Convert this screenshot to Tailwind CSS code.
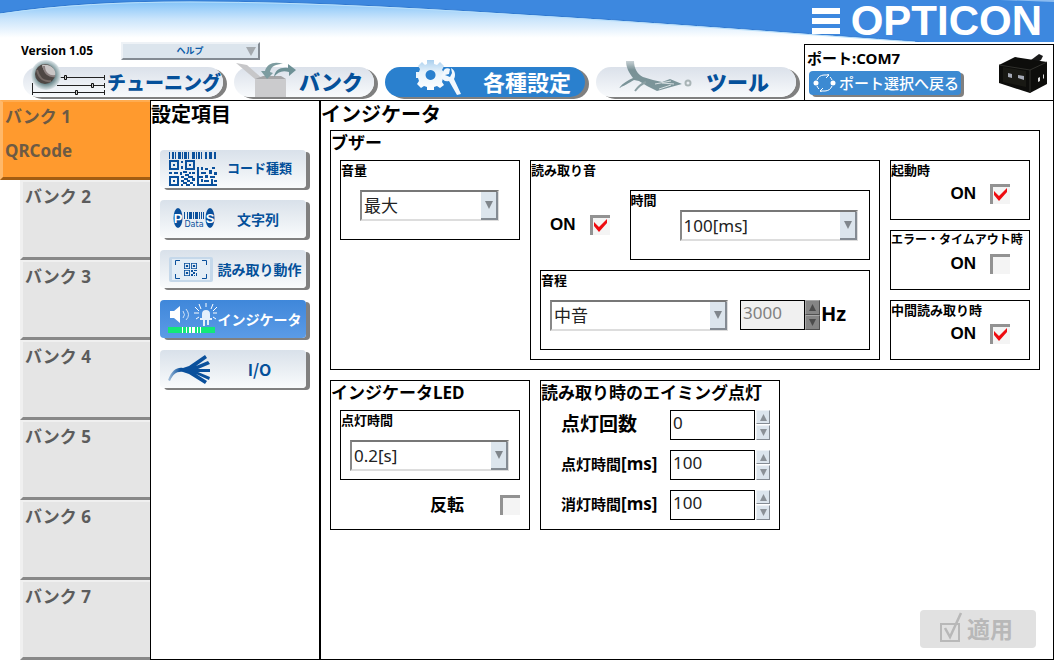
<!DOCTYPE html>
<html lang="ja">
<head>
<meta charset="utf-8">
<title>OPTICON</title>
<script src="https://cdn.jsdelivr.net/npm/@tailwindcss/browser@4"></script>
</head>
<body class="flex min-h-screen flex-col bg-white font-['Noto_Sans','Noto_Sans_CJK_JP',sans-serif] font-bold text-black">

<svg class="hidden" aria-hidden="true">
  <symbol id="finder" viewBox="0 0 7 7"><path fill-rule="evenodd" d="M0 0h7v7H0zM1 1v5h5V1zM2.200 2.200h2.600v2.600H2.200z"/></symbol>
  <symbol id="check" viewBox="0 0 20 20"><path d="M4 7l5 5L17 4V8L9 17L4 11z" fill="#ee0c10"/></symbol>
</svg>

<header class="relative">
  <svg class="absolute inset-x-0 top-0 h-[42px] w-full" viewBox="0 0 1054 42" preserveAspectRatio="none" aria-hidden="true">
    <defs>
      <linearGradient id="sky" x1="0" y1="0" x2="0" y2="1"><stop offset="0" stop-color="#7cc0f8"/><stop offset=".45" stop-color="#c9e4fb"/><stop offset=".9" stop-color="#fff"/></linearGradient>
    </defs>
    <rect width="1054" height="42" fill="url(#sky)"/>
    <path d="M0 13C60 4 120 1 190 1C320 1 440 9 570 17C680 24 800 33 925 42H1054V0H0Z" fill="#3d88df"/>
    <path d="M0 13C60 4 120 1 190 1C320 1 440 9 570 17C680 24 800 33 925 42" fill="none" stroke="#2f78d0" stroke-width="1"/>
    <path d="M0 14C60 5 120 2 190 2C320 2 440 10 570 18C680 25 800 34 915 42" fill="none" stroke="#b9e0fb" stroke-width="1"/>
    <path d="M1000 0L1054 2V0Z" fill="#8cbcf0"/>
  </svg>

  <div class="relative flex h-[42px] items-center justify-end gap-[11px] pr-[12px] text-white">
    <svg class="h-[27px] w-[28px]" viewBox="0 0 28 27" fill="currentColor" aria-hidden="true"><path d="M0 0h28v6H0zM0 10h28v6H0zM0 20h28v6H0z"/></svg>
    <span class="font-['Liberation_Sans',sans-serif] text-[42px] leading-[40px]">OPTICON</span>
  </div>

  <div class="relative flex h-[58px]">
    <div class="flex-1">
      <div class="flex h-[18px] items-center gap-[29px] pl-[21px]">
        <span class="w-[71px] text-[12px] leading-[16px] whitespace-nowrap">Version 1.05</span>
        <button type="button" class="flex h-[18px] w-[139px] items-center border-2 border-t-[#eef2f6] border-l-[#eef2f6] border-r-[#848b93] border-b-[#848b93] bg-[#dce5ed] pr-[2px] pl-[11px] text-[9px] font-bold text-[#0c5ca8]">
          <span class="flex-1 text-center">ヘルプ</span>
          <svg class="h-[9px] w-[10px]" viewBox="0 0 10 9" aria-hidden="true"><path d="M0 0h10L5 9z" fill="#a4a9ae"/></svg>
        </button>
      </div>
      <nav class="flex gap-[11px] pt-[7px] pl-[23px] text-[#04509a]">
        <button type="button" class="relative h-[30px] w-[200px] rounded-full bg-linear-to-b from-[#dbe1ea] to-[#f8fafc] pr-[2px] text-right text-[19px] leading-[32px] font-black whitespace-nowrap shadow-[4px_2px_0_#808080]">
          <svg class="absolute -top-[7px] left-[8px] h-[38px] w-[76px]" viewBox="0 0 76 38" aria-hidden="true">
            <defs><radialGradient id="knob"><stop offset=".55" stop-color="#5d7b80"/><stop offset=".8" stop-color="#a4b8bb"/><stop offset="1" stop-color="#dfe6ea"/></radialGradient></defs>
            <g stroke="#222" stroke-width="1" fill="none"><path d="M28 17.500h45M26 25.500h47M1.500 32.500h72M73.500 15v5M73.500 23v5M73.500 30v5M1.500 23v12"/></g>
            <g fill="#ccc" stroke="#111"><path d="M33.500 15.500h2v4h-2zM60.500 23.500h2v4h-2zM44.500 30.500h2v4h-2z"/></g>
            <circle cx="15" cy="15" r="15" fill="url(#knob)"/>
            <circle cx="14" cy="14" r="10" fill="#4e4744"/>
            <path d="M11 5C20 3 26 10 24 16C19 17 12 12 11 5Z" fill="#c9c5c5"/><path d="M13 6C13 13 18 17 24 16" fill="none" stroke="#8b8080" stroke-width="2"/><path d="M6 10C8 19 14 22 20 21" fill="none" stroke="#766b67" stroke-width="2"/>
          </svg>チューニング</button>
        <button type="button" class="relative h-[30px] w-[140px] rounded-full bg-linear-to-b from-[#dbe1ea] to-[#f8fafc] pr-[11px] text-right text-[21px] leading-[30px] font-black whitespace-nowrap shadow-[4px_2px_0_#808080]">
          <svg class="absolute -top-[5px] left-[2px] h-[36px] w-[60px]" viewBox="0 0 60 36" aria-hidden="true">
            <path d="M0 1L11 3L27 17H19Z" fill="#c7c7c9"/><path d="M19 17L27 14H45L50 17Z" fill="#a5a5a7"/><path d="M19 17h31v18H19z" fill="#cbcbcd"/>
            <path d="M47 2C39-1 31 1 29 9H25L31 17L37 11L34 10C35 4 40 2 47 2Z" fill="#7d9ca0"/>
            <path d="M38 15C39 8 44 5 52 6V2L60 8L53 14V10C46 8 42 10 38 15Z" fill="#6e9196"/>
          </svg>バンク</button>
        <button type="button" aria-current="page" class="relative h-[30px] w-[200px] rounded-full bg-[#2a80ce] pr-[14px] text-right text-[22px] leading-[30px] font-bold whitespace-nowrap text-white shadow-[4px_2px_0_#808080]">
          <svg class="absolute -top-[7px] left-[31px] h-[36px] w-[46px]" viewBox="0 0 46 36" aria-hidden="true">
            <defs><linearGradient id="gear" x1="0" y1="0" x2="0" y2="1"><stop offset="0" stop-color="#a9cfee"/><stop offset=".4" stop-color="#e6f2fb"/><stop offset="1" stop-color="#fff"/></linearGradient></defs>
            <path fill="url(#gear)" fill-rule="evenodd" d="M11 0h7v4l3 1 3-3 4 4-2 4 2 2h1v6h-2l-1 4 2 3-4 3-3-2-3 1v3h-7v-3l-3-1-3 2-4-4 2-3-1-3H0v-6h3l1-3-2-3 4-4 3 3 2-1zM14.500 10a5 5 0 1 0 .1 0z"/>
            <path d="M29 15l4-1 1-5c-3-2-7 0-7 4l-2 3c1 4 4 6 8 5l8 14 4-1-7-15c2-4 1-9-3-11l1 5-2 4z" fill="#f2f8fd"/>
          </svg>各種設定</button>
        <button type="button" class="relative h-[30px] w-[200px] rounded-full bg-linear-to-b from-[#dbe1ea] to-[#f8fafc] pr-[27px] text-right text-[21px] leading-[30px] font-black whitespace-nowrap shadow-[4px_2px_0_#808080]">
          <svg class="absolute -top-[6px] left-[23px] h-[34px] w-[74px]" viewBox="0 0 74 34" aria-hidden="true">
            <defs><linearGradient id="wire" x1="0" y1="0" x2="0" y2="1"><stop offset="0" stop-color="#c8d1d5"/><stop offset=".3" stop-color="#799196"/><stop offset="1" stop-color="#7c969b"/></linearGradient></defs>
            <path d="M7 0h8c0 7 3 13 9 16l10 3 9 2 8-3 12 5-11 3-14 4-10-5-8-5-5-1C13 20 7 24 0 27c4-5 9-8 14-10C10 12 7 6 7 0z" fill="url(#wire)"/>
            <path d="M27 21c-5 2-8 5-11 9" fill="none" stroke="#8ba0a4" stroke-width="2"/>
            <path d="M36 23l16-3M40 28l12-4M43 22l12 1" stroke="#d8e0e3"/>
            <circle cx="69" cy="22" r="2.500" fill="none" stroke="#a9b4b6" stroke-width="2"/>
          </svg>ツール</button>
      </nav>
    </div>
    <section class="mt-[2px] flex w-[250px] border border-b-0 border-black pt-[2px] pr-[4px] pl-[4px]">
      <div class="flex-1">
        <p class="-ml-[2px] text-[15px] leading-[22px]">ポート:COM7</p>
        <button type="button" class="mt-[2px] flex h-[24px] w-[152px] items-center gap-[3px] rounded-[4px] bg-[#3c8ad2] pl-[4px] text-[15px] leading-[22px] font-medium whitespace-nowrap text-white shadow-[3px_2px_0_#808080]">
          <svg class="h-[18px] w-[23px] shrink-0" viewBox="0 0 23 18" aria-hidden="true"><g fill="none" stroke="#fff" stroke-width="1"><path d="M4 6A8 8 0 0 1 11 1H15M19 6A8 8 0 0 0 17 3M19 12A8 8 0 0 1 12 17H8M4 12A8 8 0 0 0 6 15"/><path d="M13-1l3 2-3 3M10 14l-3 3 3 2"/></g><circle cx="3" cy="9" r="2.500" fill="#fff"/><circle cx="20" cy="9" r="2.500" fill="#fff"/></svg>
          ポート選択へ戻る</button>
      </div>
      <svg class="mt-[6px] h-[42px] w-[52px]" viewBox="0 0 52 42" aria-hidden="true">
        <path d="M34 7l8-6 4 2-2 4-5 3z" fill="#1b1b1b"/><path d="M2 12L18 4L50 9V31L33 40L2 30Z" fill="#0d0d0b"/><path d="M2 12L33 17L50 9M33 17V40" stroke="#30302c" fill="none"/><path d="M6 14L29 18V34L6 29Z" fill="#191914"/>
        <path d="M11 20l4 1v4l-4-1zM21 22l6 1v4l-6-2z" fill="#a5a9b5"/><path d="M41 25l2-1v4l-2 1zM46 22l1-1v4l-1 1z" fill="#ddd"/>
      </svg>
    </section>
  </div>
</header>

<main class="flex flex-1">
  <nav class="flex w-[150px] shrink-0 flex-col text-left text-[17px] leading-[24px] text-[#5c5c5c]">
    <button type="button" class="flex h-[80px] flex-col items-start gap-[10px] border-t-2 border-b-3 border-l-3 border-t-[#ffac50] border-b-[#a35d12] border-l-[#ffb869] bg-[#ff9a2e] pt-[3px] pl-[2px] text-[#6d5a44]"><span>バンク 1</span><span>QRCode</span></button>
    <button type="button" class="ml-[20px] flex h-[80px] border-t-2 border-b-3 border-l-3 border-t-[#f0f0f0] border-b-[#888] border-l-[#f0f0f0] bg-[#e5e5e5] pt-[3px] pl-[2px]">バンク 2</button>
    <button type="button" class="ml-[20px] flex h-[80px] border-t-2 border-b-3 border-l-3 border-t-[#f0f0f0] border-b-[#888] border-l-[#f0f0f0] bg-[#e5e5e5] pt-[3px] pl-[2px]">バンク 3</button>
    <button type="button" class="ml-[20px] flex h-[80px] border-t-2 border-b-3 border-l-3 border-t-[#f0f0f0] border-b-[#888] border-l-[#f0f0f0] bg-[#e5e5e5] pt-[3px] pl-[2px]">バンク 4</button>
    <button type="button" class="ml-[20px] flex h-[80px] border-t-2 border-b-3 border-l-3 border-t-[#f0f0f0] border-b-[#888] border-l-[#f0f0f0] bg-[#e5e5e5] pt-[3px] pl-[2px]">バンク 5</button>
    <button type="button" class="ml-[20px] flex h-[80px] border-t-2 border-b-3 border-l-3 border-t-[#f0f0f0] border-b-[#888] border-l-[#f0f0f0] bg-[#e5e5e5] pt-[3px] pl-[2px]">バンク 6</button>
    <button type="button" class="ml-[20px] flex h-[80px] border-t-2 border-b-3 border-l-3 border-t-[#f0f0f0] border-b-[#888] border-l-[#f0f0f0] bg-[#e5e5e5] pt-[3px] pl-[2px]">バンク 7</button>
  </nav>

  <nav class="w-[170px] shrink-0 border border-black">
    <h2 class="text-[20px] leading-[28px]">設定項目</h2>
    <div class="mt-[21px] ml-[9px] flex w-[146px] flex-col gap-[12px] text-[14px] text-[#04509a]">
      <button type="button" class="flex h-[38px] items-center rounded-[4px] bg-linear-to-b from-[#d9e1ea] to-[#f9fbfc] pl-[8px] whitespace-nowrap shadow-[4px_2px_0_#808080]">
        <svg class="-mr-[4px] h-[34px] w-[49px]" viewBox="0 0 49 34" fill="#0a509c" shape-rendering="crispEdges" aria-hidden="true">
          <path d="M1 0h1v7H1zM4 0h2v7H4zM7 0h1v7H7zM10 0h3v7h-3zM14 0h1v7h-1zM16 0h3v7h-3zM20 0h1v7h-1zM24 0h3v7h-3zM28 0h1v7h-1zM30 0h2v7h-2zM33 0h1v7h-1zM37 0h2v7h-2zM41 0h3v7h-3zM46 0h2v7h-2z"/>
          <path fill-rule="evenodd" d="M1 8h10v10H1zM3 10v6h6v-6zM5 12h2v2H5zM17 8h10v10H17zM19 10v6h6v-6zM21 12h2v2h-2zM1 24h10v10H1zM3 26v6h6v-6zM5 28h2v2H5z"/>
          <path d="M13 9h2v2h-2zM13 14h2v3h-2zM1 20h3v2H1zM6 20h4v2H6zM12 20h2v3h-2zM15 19h4v2h-4zM21 20h2v2h-2zM24 20h3v2h-3zM17 22h4v2h-4zM13 24h3v2h-3zM20 24h5v2h-5zM16 26h4v2h-4zM24 26h3v3h-3zM13 28h3v2h-3zM19 28h3v2h-3zM15 30h4v2h-4zM22 30h3v2h-3zM13 32h2v2h-2zM18 32h4v2h-4zM25 32h2v2h-2zM29 15h2v19h-2zM31 32h18v2H31zM33 15h2v3h-2zM37 16h3v2h-3zM44 15h3v2h-3zM33 20h5v2h-5zM41 18h3v4h-3zM46 20h3v3h-3zM31 24h4v2h-4zM37 23h3v3h-3zM42 24h5v2h-5zM33 27h2v3h-2zM36 28h5v2h-5zM43 27h2v5h-2zM46 28h3v2h-3z"/>
        </svg><span class="flex-1 text-center text-[13px]">コード種類</span></button>
      <button type="button" class="flex h-[38px] items-center rounded-[4px] bg-linear-to-b from-[#d9e1ea] to-[#f9fbfc] pr-[3px] pl-[8px] whitespace-nowrap shadow-[4px_2px_0_#808080]">
        <svg class="-mr-[4px] h-[34px] w-[49px]" viewBox="0 0 49 34" aria-hidden="true">
          <g fill="#0a509c"><ellipse cx="10" cy="16" rx="4.500" ry="10"/><ellipse cx="42" cy="16" rx="4.500" ry="10"/><path d="M16 10h1v7h-1zM19 10h1v7h-1zM21 10h3v7h-3zM25 10h1v7h-1zM27 10h3v7h-3zM31 10h1v7h-1zM33 10h1v7h-1zM35 10h1v7h-1z"/></g>
          <g font-family="Liberation Sans" font-weight="bold" text-anchor="middle"><text x="10" y="21" font-size="13" fill="#fff">P</text><text x="42" y="21" font-size="13" fill="#fff">S</text><text x="26" y="25" font-size="8" font-weight="normal" font-family="DejaVu Sans" fill="#0a509c">Data</text></g>
        </svg><span class="flex-1 text-center">文字列</span></button>
      <button type="button" class="flex h-[38px] items-center rounded-[4px] bg-linear-to-b from-[#d9e1ea] to-[#f9fbfc] pl-[8px] whitespace-nowrap shadow-[4px_2px_0_#808080]">
        <svg class="-mr-[4px] h-[34px] w-[49px]" viewBox="0 0 49 34" fill="#0a509c" aria-hidden="true">
          <rect x="1" y="5" width="44" height="25" rx="2" fill="#c5d8ea"/><rect x="4" y="7" width="38" height="21" fill="#e3edf6"/>
          <path d="M7.500 13V8.500H12M34 8.500h4.500V13M38.500 22v4.500H34M12 26.500H7.500V22" fill="none" stroke="#0a509c"/>
          <use href="#finder" x="16" y="11" width="6" height="6"/><use href="#finder" x="23" y="11" width="6" height="6"/><use href="#finder" x="16" y="18" width="6" height="6"/>
          <path d="M23 18h2v2h-2zM26 18h3v1h-3zM25 20h2v2h-2zM28 21h1v3h-1zM23 22h2v2h-2zM26 23h1v1h-1z"/>
        </svg><span class="flex-1 text-center">読み取り動作</span></button>
      <button type="button" aria-current="true" class="flex h-[38px] items-center rounded-[4px] bg-linear-to-b from-[#3f87da] to-[#5b9be6] pl-[8px] whitespace-nowrap text-white shadow-[4px_2px_0_#808080]">
        <svg class="-mr-[4px] h-[34px] w-[49px]" viewBox="0 0 49 34" fill="#fff" aria-hidden="true">
          <path d="M2 9h4l6-5v17l-6-5H2z"/><path d="M15 9q3 4 0 7M18 7q5 6 0 11" fill="none" stroke="#d0e3f8" stroke-width="1"/>
          <path d="M34 12a4 4 0 0 1 8 0v4h2v2H32v-2h2zM35 18h2v6h-2zM39 18h2v5h-2z" fill="#e4effb"/>
          <path d="M38 1v4M31 2l2 5M45 2l-2 5M27 5l4 4M49 5l-4 4M26 11h5M50 11h-5M28 17l3-2M48 17l-3-2" stroke="#fff"/>
          <path d="M0 25h47v6H0z" fill="#12e878"/><path d="M14 25h1v6h-1zM18 25h1v6h-1zM21 25h2v6h-2zM24 25h3v6h-3zM29 25h1v6h-1zM32 25h1v6h-1z"/>
        </svg><span class="flex-1 text-center">インジケータ</span></button>
      <button type="button" class="flex h-[38px] items-center rounded-[4px] bg-linear-to-b from-[#d9e1ea] to-[#f9fbfc] pl-[8px] whitespace-nowrap shadow-[4px_2px_0_#808080]">
        <svg class="-mr-[4px] h-[34px] w-[49px]" viewBox="0 0 49 34" aria-hidden="true">
          <defs><linearGradient id="cable"><stop offset="0" stop-color="#a9c3dd"/><stop offset=".3" stop-color="#0a509c"/></linearGradient></defs>
          <path d="M0 28C4 18 9 15 15 16L21 14L37 3L39 6L28 14L40 9L42 12L30 17H42V20H30L42 25L41 28L28 22L39 29L37 32L21 22L15 20C9 19 5 22 2 29Z" fill="url(#cable)"/>
        </svg><span class="flex-1 text-center font-['Noto_Sans_CJK_JP',sans-serif] text-[16px]">I/O</span></button>
    </div>
  </nav>

  <section class="flex min-w-0 flex-1 flex-col border border-black">
    <h2 class="mb-px text-[20px] leading-[28px]">インジケータ</h2>

    <section class="mr-[13px] ml-[9px] border border-black pb-[9px]">
      <h3 class="mb-[5px] text-[17px] leading-[24px]">ブザー</h3>
      <div class="grid grid-cols-[180px_1fr_140px] gap-[10px] px-[9px]">
        <div class="h-[80px] border border-black">
          <h4 class="text-[13px] leading-[18px]"><label for="volume">音量</label></h4>
          <div class="relative mt-[11px] mr-[20px] ml-[19px]">
            <select id="volume" class="h-[31px] w-full appearance-none border-2 border-t-[#777] border-r-[#ddd] border-b-[#ddd] border-l-[#888] bg-white pl-[2px] text-[17px] font-normal text-[#222]"><option>最大</option><option>中</option><option>小</option></select>
            <span class="pointer-events-none absolute top-[2px] right-[1px] bottom-[1px] flex w-[17px] items-center justify-center border-r-2 border-b-2 border-[#848b93] bg-[#dce5ed]"><svg class="h-[8px] w-[8px]" viewBox="0 0 8 8" fill="#80868c"><path d="M0 0h8L4 8z"/></svg></span>
          </div>
        </div>

        <div class="border border-black pb-[9px]">
          <h4 class="text-[13px] leading-[18px]">読み取り音</h4>
          <div class="mt-[11px] flex items-center gap-[20px] pr-[9px] pl-[19px]">
            <label class="flex items-center gap-[14px] font-['Liberation_Sans',sans-serif] text-[17px] leading-[20px]">ON
              <span class="relative size-[20px]"><input type="checkbox" checked class="peer block size-[20px] appearance-none border-t-3 border-l-3 border-[#929292] bg-[#f4f4f4]"><svg class="pointer-events-none absolute inset-0 hidden size-[20px] peer-checked:block"><use href="#check"/></svg></span></label>
            <div class="h-[70px] flex-1 border border-black">
              <h5 class="text-[13px] leading-[18px]"><label for="time">時間</label></h5>
              <div class="relative mt-[1px] mr-[11px] ml-[49px]">
                <select id="time" class="h-[31px] w-full appearance-none border-2 border-t-[#777] border-r-[#ddd] border-b-[#ddd] border-l-[#888] bg-white pl-[2px] text-[17px] font-normal text-[#222]"><option>100[ms]</option><option>200[ms]</option></select>
                <span class="pointer-events-none absolute top-[2px] right-[1px] bottom-[1px] flex w-[17px] items-center justify-center border-r-2 border-b-2 border-[#848b93] bg-[#dce5ed]"><svg class="h-[8px] w-[8px]" viewBox="0 0 8 8" fill="#80868c"><path d="M0 0h8L4 8z"/></svg></span>
              </div>
            </div>
          </div>
          <div class="mx-[9px] mt-[10px] h-[80px] border border-black">
            <h5 class="text-[13px] leading-[18px]"><label for="pitch">音程</label></h5>
            <div class="mt-[11px] flex pl-[9px]">
              <div class="relative mr-[12px] flex-1">
                <select id="pitch" class="h-[31px] w-full appearance-none border-2 border-t-[#777] border-r-[#ddd] border-b-[#ddd] border-l-[#888] bg-white pl-[2px] text-[17px] font-normal text-[#222]"><option>中音</option><option>高音</option><option>低音</option></select>
                <span class="pointer-events-none absolute top-[2px] right-[1px] bottom-[1px] flex w-[17px] items-center justify-center border-r-2 border-b-2 border-[#848b93] bg-[#dce5ed]"><svg class="h-[8px] w-[8px]" viewBox="0 0 8 8" fill="#80868c"><path d="M0 0h8L4 8z"/></svg></span>
              </div>
              <input aria-label="周波数" inputmode="numeric" value="3000" disabled class="h-[30px] w-[65px] border border-black bg-[#f0f0f0] pb-[6px] pl-[2px] text-[17px] font-normal text-[#808080]">
              <div class="flex w-[15px] flex-col">
                <button type="button" disabled aria-label="増やす" class="flex h-[15px] items-center justify-center border border-t-[#a8a8a8] border-r-[#505050] border-b-[#505050] border-l-[#a8a8a8] bg-[#858585]"><svg class="h-[7px] w-[7px]" viewBox="0 0 8 8" fill="#4c4c4c"><path d="M4 0l4 8H0z"/></svg></button>
                <button type="button" disabled aria-label="減らす" class="flex h-[15px] items-center justify-center border border-t-[#a8a8a8] border-r-[#505050] border-b-[#505050] border-l-[#a8a8a8] bg-[#858585]"><svg class="h-[7px] w-[7px]" viewBox="0 0 8 8" fill="#4c4c4c"><path d="M0 0h8L4 8z"/></svg></button>
              </div>
              <span class="w-[49px] pl-[1px] text-[20px] leading-[28px]">Hz</span>
            </div>
          </div>
        </div>

        <div class="flex flex-col gap-[10px]">
          <div class="h-[60px] border border-black">
            <h4 class="text-[13px] leading-[18px]">起動時</h4>
            <label class="mt-[5px] mr-[19px] flex items-center justify-end gap-[14px] font-['Liberation_Sans',sans-serif] text-[17px] leading-[20px]">ON
              <span class="relative size-[20px]"><input type="checkbox" checked class="peer block size-[20px] appearance-none border-t-3 border-l-3 border-[#929292] bg-[#f4f4f4]"><svg class="pointer-events-none absolute inset-0 hidden size-[20px] peer-checked:block"><use href="#check"/></svg></span></label>
          </div>
          <div class="h-[60px] border border-black">
            <h4 class="text-[12px] leading-[18px] whitespace-nowrap">エラー・タイムアウト時</h4>
            <label class="mt-[5px] mr-[19px] flex items-center justify-end gap-[14px] font-['Liberation_Sans',sans-serif] text-[17px] leading-[20px]">ON
              <span class="relative size-[20px]"><input type="checkbox" class="peer block size-[20px] appearance-none border-t-3 border-l-3 border-[#929292] bg-[#f4f4f4]"><svg class="pointer-events-none absolute inset-0 hidden size-[20px] peer-checked:block"><use href="#check"/></svg></span></label>
          </div>
          <div class="h-[60px] border border-black">
            <h4 class="text-[13px] leading-[18px]">中間読み取り時</h4>
            <label class="mt-[5px] mr-[19px] flex items-center justify-end gap-[14px] font-['Liberation_Sans',sans-serif] text-[17px] leading-[20px]">ON
              <span class="relative size-[20px]"><input type="checkbox" checked class="peer block size-[20px] appearance-none border-t-3 border-l-3 border-[#929292] bg-[#f4f4f4]"><svg class="pointer-events-none absolute inset-0 hidden size-[20px] peer-checked:block"><use href="#check"/></svg></span></label>
          </div>
        </div>
      </div>
    </section>

    <div class="mt-[10px] ml-[9px] flex gap-[10px]">
      <section class="w-[200px] border border-black pb-[14px]">
        <h3 class="mb-[5px] text-[17px] leading-[24px]">インジケータLED</h3>
        <div class="mx-[9px] h-[70px] border border-black">
          <h4 class="text-[13px] leading-[18px]"><label for="led-time">点灯時間</label></h4>
          <div class="relative mt-[11px] mr-[10px] ml-[9px]">
            <select id="led-time" class="h-[31px] w-full appearance-none border-2 border-t-[#777] border-r-[#ddd] border-b-[#ddd] border-l-[#888] bg-white pl-[2px] text-[17px] font-normal text-[#222]"><option>0.2[s]</option><option>0.5[s]</option></select>
            <span class="pointer-events-none absolute top-[2px] right-[1px] bottom-[1px] flex w-[17px] items-center justify-center border-r-2 border-b-2 border-[#848b93] bg-[#dce5ed]"><svg class="h-[8px] w-[8px]" viewBox="0 0 8 8" fill="#80868c"><path d="M0 0h8L4 8z"/></svg></span>
          </div>
        </div>
        <label class="mt-[15px] mr-[9px] flex items-center justify-end gap-[36px] text-[17px] leading-[20px]">反転
          <span class="relative size-[20px]"><input type="checkbox" class="peer block size-[20px] appearance-none border-t-3 border-l-3 border-[#929292] bg-[#f4f4f4]"><svg class="pointer-events-none absolute inset-0 hidden size-[20px] peer-checked:block"><use href="#check"/></svg></span></label>
      </section>

      <section class="w-[240px] border border-black">
        <h3 class="mb-[5px] text-[17px] leading-[24px] whitespace-nowrap">読み取り時のエイミング点灯</h3>
        <div class="flex flex-col gap-[10px] pr-[9px] pl-[20px] text-[15px] leading-[28px]">
          <div class="flex">
            <label for="count" class="flex-1 text-[19px]">点灯回数</label>
            <input id="count" inputmode="numeric" value="0" class="h-[30px] w-[85px] border border-black bg-white pb-[6px] pl-[2px] text-[17px] font-normal text-[#222]">
            <div class="flex w-[15px] flex-col gap-px pl-px">
              <button type="button" aria-label="増やす" class="flex h-[14px] items-center justify-center border border-t-[#eef2f6] border-r-[#848b93] border-b-[#848b93] border-l-[#eef2f6] bg-[#dce5ed]"><svg class="h-[7px] w-[7px]" viewBox="0 0 8 8" fill="#8b9197"><path d="M4 0l4 8H0z"/></svg></button>
              <button type="button" aria-label="減らす" class="flex h-[15px] items-center justify-center border border-t-[#eef2f6] border-r-[#848b93] border-b-[#848b93] border-l-[#eef2f6] bg-[#dce5ed]"><svg class="h-[7px] w-[7px]" viewBox="0 0 8 8" fill="#8b9197"><path d="M0 0h8L4 8z"/></svg></button>
            </div>
          </div>
          <div class="flex">
            <label for="on-ms" class="flex-1 whitespace-nowrap">点灯時間<span class="text-[17px]">[ms]</span></label>
            <input id="on-ms" inputmode="numeric" value="100" class="h-[30px] w-[85px] border border-black bg-white pb-[6px] pl-[2px] text-[17px] font-normal text-[#222]">
            <div class="flex w-[15px] flex-col gap-px pl-px">
              <button type="button" aria-label="増やす" class="flex h-[14px] items-center justify-center border border-t-[#eef2f6] border-r-[#848b93] border-b-[#848b93] border-l-[#eef2f6] bg-[#dce5ed]"><svg class="h-[7px] w-[7px]" viewBox="0 0 8 8" fill="#8b9197"><path d="M4 0l4 8H0z"/></svg></button>
              <button type="button" aria-label="減らす" class="flex h-[15px] items-center justify-center border border-t-[#eef2f6] border-r-[#848b93] border-b-[#848b93] border-l-[#eef2f6] bg-[#dce5ed]"><svg class="h-[7px] w-[7px]" viewBox="0 0 8 8" fill="#8b9197"><path d="M0 0h8L4 8z"/></svg></button>
            </div>
          </div>
          <div class="flex">
            <label for="off-ms" class="flex-1 whitespace-nowrap">消灯時間<span class="text-[17px]">[ms]</span></label>
            <input id="off-ms" inputmode="numeric" value="100" class="h-[30px] w-[85px] border border-black bg-white pb-[6px] pl-[2px] text-[17px] font-normal text-[#222]">
            <div class="flex w-[15px] flex-col gap-px pl-px">
              <button type="button" aria-label="増やす" class="flex h-[14px] items-center justify-center border border-t-[#eef2f6] border-r-[#848b93] border-b-[#848b93] border-l-[#eef2f6] bg-[#dce5ed]"><svg class="h-[7px] w-[7px]" viewBox="0 0 8 8" fill="#8b9197"><path d="M4 0l4 8H0z"/></svg></button>
              <button type="button" aria-label="減らす" class="flex h-[15px] items-center justify-center border border-t-[#eef2f6] border-r-[#848b93] border-b-[#848b93] border-l-[#eef2f6] bg-[#dce5ed]"><svg class="h-[7px] w-[7px]" viewBox="0 0 8 8" fill="#8b9197"><path d="M0 0h8L4 8z"/></svg></button>
            </div>
          </div>
        </div>
      </section>
    </div>

    <button type="button" disabled class="mt-auto mr-[17px] mb-[11px] flex h-[38px] w-[116px] items-center gap-[4px] self-end rounded-[4px] bg-[#e1e1e1] pl-[19px] text-[23px] leading-[38px] text-[#b8b8b8]">
      <svg class="h-[34px] w-[24px]" viewBox="0 0 24 34" fill="none" stroke="#b8b8b8" aria-hidden="true"><path d="M2 12h18v17H2z" stroke-width="2"/><path d="M6 16l5 9L22 1" stroke-width="2.500"/></svg>適用</button>
  </section>
</main>
</body>
</html>
